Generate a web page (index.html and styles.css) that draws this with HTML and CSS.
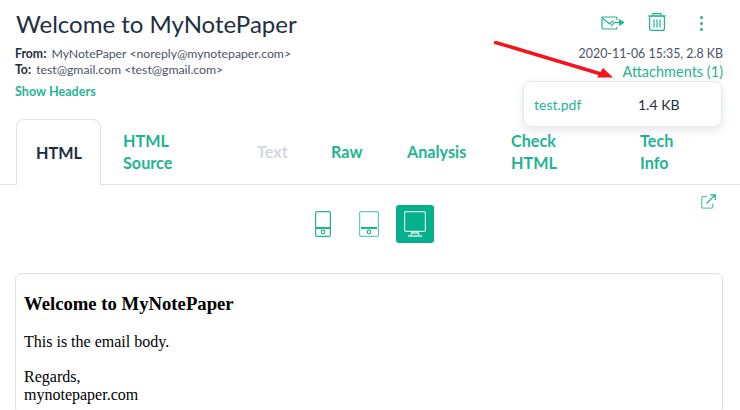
FILE: index.html
```html
<!DOCTYPE html>
<html lang="en">
<head>
  <meta charset="UTF-8">
  <meta name="viewport" content="width=device-width, initial-scale=1.0">
  <title>Welcome to MyNotePaper</title>
  <link rel="stylesheet" href="styles.css">
</head>
<body>
  <!-- Message header -->
  <header class="msg-header">
    <div class="msg-top">
      <h1>Welcome to MyNotePaper</h1>
      <div class="msg-actions">
        <svg class="icon-forward" width="23" height="14" viewBox="0 0 23 14" fill="none" stroke="#1fb592" stroke-width="1.2">
          <path d="M16 11v1a1 1 0 0 1-1 1H2a1 1 0 0 1-1-1V2a1 1 0 0 1 1-1h13a1 1 0 0 1 1 1v2"/>
          <path d="M1.500 2l7 6 4-3.500"/>
          <path d="M10 10l3.500-3.500H19"/>
          <path d="M18.500 4l4 2.500-4 2.500z" fill="#1fb592"/>
        </svg>
        <svg class="icon-trash" width="18" height="18" viewBox="0 0 18 18" fill="none" stroke="#1fb592" stroke-width="1.2">
          <path d="M0 3h18"/>
          <path d="M5 2.500V0.600h8V2.500"/>
          <rect x="1.600" y="3" width="14.800" height="14.400" rx="2"/>
          <path d="M6 6.500v8M9 6.500v8M12 6.500v8"/>
        </svg>
        <div class="icon-dots"><i></i><i></i><i></i></div>
      </div>
    </div>
    <div class="msg-meta">
      <div class="msg-people">
        <p><b>From:</b> MyNotePaper &lt;noreply@mynotepaper.com&gt;</p>
        <p><b>To:</b> test@gmail.com &lt;test@gmail.com&gt;</p>
        <a href="#" class="show-headers">Show Headers</a>
      </div>
      <div class="msg-info">
        <p>2020-11-06 15:35, 2.8 KB</p>
        <a href="#" class="attach-link">Attachments (1)</a>
      </div>
    </div>
  </header>

  <!-- Attachment dropdown -->
  <div class="attach-menu">
    <a href="#">test.pdf</a>
    <span>1.4 KB</span>
  </div>

  <!-- Red annotation arrow -->
  <svg class="red-arrow" width="122" height="38" viewBox="0 0 122 38">
    <path d="M1 1L108 33" stroke="#f4141a" stroke-width="3.500" fill="none"/>
    <path d="M104 36.500L110 27 120 36.500z" fill="#f4141a"/>
  </svg>

  <!-- Tabs -->
  <ul class="tabs">
    <li class="tab active">HTML</li>
    <li class="tab tab-source">HTML<br>Source</li>
    <li class="tab tab-text disabled">Text</li>
    <li class="tab tab-raw">Raw</li>
    <li class="tab tab-analysis">Analysis</li>
    <li class="tab tab-check">Check<br>HTML</li>
    <li class="tab tab-tech">Tech<br>Info</li>
  </ul>

  <!-- Preview toolbar -->
  <div class="toolbar">
    <button class="device">
      <svg width="16" height="26" viewBox="0 0 16 26" fill="none" stroke="#1fb592" stroke-width="1.2">
        <rect x="0.600" y="0.600" width="14.800" height="24.800" rx="1.500"/>
        <path d="M1 17h14" stroke-width="2"/>
        <circle cx="8" cy="21" r="1.800"/>
      </svg>
    </button>
    <button class="device">
      <svg width="20" height="26" viewBox="0 0 20 26" fill="none" stroke="#1fb592" stroke-width="1.200">
        <rect x="0.600" y="0.600" width="18.800" height="24.800" rx="1.500" stroke="#5fcdb3"/>
        <path d="M2 17h16" stroke-width="2"/>
        <circle cx="10" cy="21" r="1.800"/>
      </svg>
    </button>
    <button class="device selected">
      <svg width="22" height="26" viewBox="0 0 22 26" fill="none" stroke="#d5f3ea" stroke-width="1.200">
        <rect x="0.600" y="0.600" width="20.800" height="19.800" rx="1.500"/>
        <path d="M8 21l-1 3M14 21l1 3"/>
        <path d="M7 22h8" stroke-width="1.500"/>
        <path d="M4 25h14" stroke-width="1.500"/>
      </svg>
    </button>
    <a href="#" class="open-new">
      <svg width="15" height="15" viewBox="0 0 15 15" fill="none" stroke="#1fb592" stroke-width="1.300">
        <path d="M6 2.500H2a1.300 1.300 0 0 0-1.300 1.300v9a1.300 1.300 0 0 0 1.300 1.300h8.500a1.300 1.300 0 0 0 1.300-1.300V9.500" stroke="#5fcdb3"/>
        <path d="M5.500 9.500L14 1M9 0.800h5.200V6"/>
      </svg>
    </a>
  </div>

  <!-- Email body -->
  <div class="preview">
    <h3>Welcome to MyNotePaper</h3>
    <p>This is the email body.</p>
    <p>Regards,<br>mynotepaper.com</p>
  </div>
</body>
</html>
```

FILE: styles.css
```css
html, body {
  height: 100%;
}
body {
  font-family: Lato, "Noto Sans", sans-serif;
  color: #232e42;
  background-color: #fff;
  margin: 0;
  position: relative;
  overflow: hidden;
}
a {
  text-decoration: none;
}
p {
  margin: 0;
}

/* Header styles */
.msg-header {
  padding: 0 17px 0 15px;
}
.msg-top {
  display: flex;
  justify-content: space-between;
  align-items: center;
  height: 46px;
}
.msg-top h1 {
  font-size: 24px;
  font-weight: 400;
  margin: 0;
  padding-left: 1px;
}
.msg-actions {
  display: flex;
  align-items: center;
  gap: 24px;
  padding-right: 20px;
}
.icon-trash {
  margin-bottom: 2px;
}
.icon-dots {
  display: flex;
  flex-direction: column;
  gap: 3px;
  margin-left: 10px;
}
.icon-dots i {
  display: block;
  width: 3px;
  height: 3px;
  border-radius: 50%;
  background-color: #1fb592;
}
.msg-meta {
  display: flex;
  justify-content: space-between;
  font-size: 12.250px;
  line-height: 16px;
  color: #4a5366;
}
.msg-people b {
  font-weight: 700;
  color: #232e42;
  margin-right: 2px;
}
.show-headers {
  display: block;
  margin-top: 6px;
  font-size: 12.600px;
  color: #1fb592;
  font-weight: 700;
}
.msg-info {
  text-align: right;
  font-size: 12.400px;
}
.attach-link {
  display: block;
  margin-top: 2px;
  font-size: 14.500px;
  color: #1fb592;
}

/* Dropdown */
.attach-menu {
  position: absolute;
  top: 81px;
  left: 523px;
  width: 199px;
  height: 46px;
  box-sizing: border-box;
  display: flex;
  align-items: center;
  padding-left: 10px;
  font-size: 14px;
  background-color: #fff;
  border: 1px solid #e3e8f0;
  border-radius: 8px;
  box-shadow: 0 3px 10px rgba(35, 46, 66, 0.12);
}
.attach-menu a {
  color: #1fb592;
  width: 104px;
}
.red-arrow {
  position: absolute;
  top: 41px;
  left: 493px;
}

/* Tabs */
.tabs {
  display: flex;
  list-style-type: none;
  margin: 19px 0 0;
  padding: 0 0 0 16px;
  height: 65px;
  border-bottom: 1px solid #dde4ee;
  font-size: 16.200px;
  font-weight: 700;
  line-height: 22px;
  color: #1fb592;
}
.tab {
  display: flex;
  align-items: center;
  padding-left: 22px;
  box-sizing: border-box;
}
.tab.active {
  width: 85px;
  height: 66px;
  padding-left: 19px;
  color: #232e42;
  background-color: #fff;
  border: 1px solid #dde4ee;
  border-bottom: none;
  border-radius: 8px 8px 0 0;
}
.tab.disabled {
  color: #d3d8e3;
}
.tab-source { width: 134px; }
.tab-text { width: 74px; }
.tab-raw { width: 76px; }
.tab-analysis { width: 104px; }
.tab-check { width: 129px; }
.tab-tech { width: 100px; }

/* Toolbar */
.toolbar {
  position: relative;
  display: flex;
  justify-content: center;
  align-items: center;
  gap: 8px;
  padding-top: 20px;
  padding-right: 2px;
  height: 38px;
}
.device {
  width: 38px;
  height: 38px;
  padding: 0;
  border: none;
  border-radius: 3px;
  background-color: transparent;
  display: flex;
  align-items: center;
  justify-content: center;
}
.device.selected {
  background-color: #05b08c;
}
.open-new {
  position: absolute;
  top: 9px;
  right: 24px;
  line-height: 0;
}

/* Email preview */
.preview {
  margin: 30px 17px 0 15px;
  padding: 19px 8px 0;
  border: 1px solid #dde4ee;
  border-radius: 6px;
  font-family: "Liberation Serif", serif;
  font-size: 16px;
  line-height: 18px;
  color: #000;
  height: 120px;
}
.preview h3 {
  font-size: 18.700px;
  line-height: 22px;
  margin: 0 0 18px;
}
.preview p {
  margin-bottom: 17px;
}
```
